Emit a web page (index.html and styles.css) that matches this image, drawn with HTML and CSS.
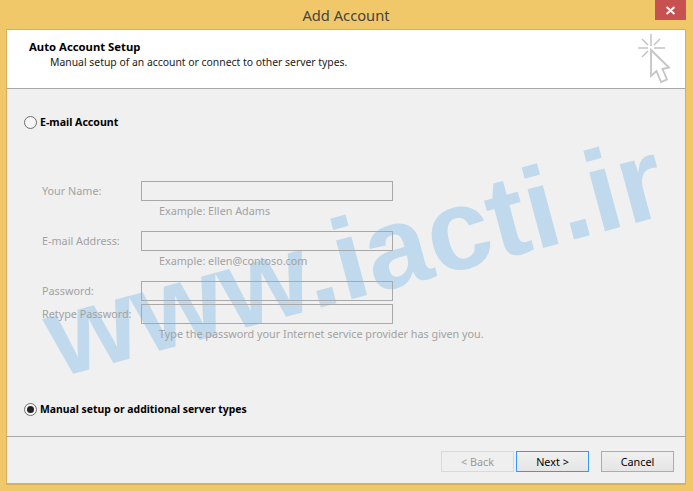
FILE: index.html
```html
<!DOCTYPE html>
<html lang="en">
<head>
<meta charset="utf-8">
<title>Add Account</title>
<link rel="stylesheet" href="styles.css">
</head>
<body>
<div class="window">
  <div class="titlebar">
    <div class="title">Add Account</div>
    <div class="close"><svg width="11" height="9" viewBox="0 0 11 9"><path d="M1.500 1 L9.500 8 M9.500 1 L1.500 8" stroke="#fff" stroke-width="2" fill="none"/></svg></div>
  </div>
  <div class="client">
    <div class="watermark">www.iacti.ir</div>
    <header class="head">
      <div class="head-text">
        <div class="head-title">Auto Account Setup</div>
        <div class="head-sub">Manual setup of an account or connect to other server types.</div>
      </div>
      <svg class="cursor" width="34" height="50" viewBox="0 0 34 50">
        <g stroke="#c4c4c4" stroke-width="1.500" fill="none">
          <path d="M14 0V12M1 14H11M17 14H28M5 5L11 11M23 5L17 11M5 23L11 17"/>
          <path d="M14 16V42L19.500 37L24 48L30 45.500L25.500 35L32 33.500Z" fill="#fff" stroke-width="1.800"/>
        </g>
      </svg>
    </header>
    <main class="body">
      <label class="radio-row first"><span class="radio"></span><span class="radio-label wide">E-mail Account</span></label>
      <div class="form">
        <div class="field"><span class="lbl">Your Name:</span><span class="box"></span></div>
        <div class="hint">Example: Ellen Adams</div>
        <div class="field gap"><span class="lbl">E-mail Address:</span><span class="box"></span></div>
        <div class="hint">Example: ellen@contoso.com</div>
        <div class="field gap"><span class="lbl">Password:</span><span class="box"></span></div>
        <div class="field tight"><span class="lbl">Retype Password:</span><span class="box"></span></div>
        <div class="hint">Type the password your Internet service provider has given you.</div>
      </div>
      <label class="radio-row second"><span class="radio on"></span><span class="radio-label">Manual setup or additional server types</span></label>
    </main>
    <footer class="foot">
      <button class="btn disabled">&lt; Back</button>
      <button class="btn default">Next &gt;</button>
      <button class="btn cancel">Cancel</button>
    </footer>
  </div>
</div>
</body>
</html>
```

FILE: styles.css
```css
* { box-sizing: border-box; }
html, body { margin: 0; padding: 0; }
body {
  width: 693px;
  height: 491px;
  overflow: hidden;
  background: #f0c86a;
  font-family: "Noto Sans", "Open Sans", sans-serif;
  font-size: 10.800px;
  color: #000;
}
.window {
  display: flex;
  flex-direction: column;
  height: 491px;
  padding: 0 7px 6px 6px;
}
.titlebar {
  height: 29px;
  flex: none;
  display: flex;
  justify-content: center;
  position: relative;
}
.title {
  font-size: 14.700px;
  line-height: 30px;
  color: #444;
}
.close {
  position: absolute;
  top: 0;
  right: 0;
  width: 31px;
  height: 20px;
  background: #c75050;
  display: flex;
  align-items: center;
  justify-content: center;
}
.client {
  flex: 1;
  position: relative;
  overflow: hidden;
  display: flex;
  flex-direction: column;
  background: #f0f0f0;
  border: 1px solid #d6b05a;
  border-bottom-width: 2px;
}
.watermark {
  position: absolute;
  left: 30px;
  top: 162px;
  font-family: "Liberation Sans", Arial, sans-serif;
  font-weight: 700;
  font-size: 115px;
  line-height: 130px;
  white-space: nowrap;
  color: #c0d9ec;
  transform: rotate(-15deg);
}
.head {
  position: relative;
  height: 59px;
  flex: none;
  background: #fff;
  border-bottom: 1px solid #a8a8a8;
  display: flex;
  justify-content: space-between;
  padding: 9px 14px 0 22px;
}
.head-title { font-weight: 700; font-size: 11.300px; line-height: 16px; }
.head-sub { padding-left: 21px; font-size: 10.400px; line-height: 14px; color: #1a1a1a; }
.cursor { margin-top: -5px; }
.body {
  position: relative;
  flex: 1;
  padding: 0 0 0 17px;
  display: flex;
  flex-direction: column;
}
.radio-row { display: flex; align-items: center; gap: 3px; font-weight: 700; font-size: 10.400px; height: 16px; }
.radio-label.wide { font-size: 10.600px; }
.radio-row.first { margin-top: 25px; }
.radio-row.second { margin-top: 57px; }
.radio {
  width: 13px;
  height: 13px;
  border-radius: 50%;
  border: 1px solid #6d6d6d;
  background: #f6f6f6;
  flex: none;
  display: flex;
  align-items: center;
  justify-content: center;
}
.radio.on::after {
  content: "";
  width: 7px;
  height: 7px;
  border-radius: 50%;
  background: #222;
}
.form { margin-top: 51px; padding-left: 18px; color: #a2a2a2; }
.field { display: flex; align-items: center; height: 20px; }
.field.gap { margin-top: 10px; }
.field.tight { margin-top: 3px; }
.lbl { width: 99px; flex: none; padding-bottom: 2px; }
.box { width: 252px; height: 20px; border: 1px solid #a9a9a9; }
.hint { padding-left: 117px; line-height: 20px; }
.foot {
  position: relative;
  height: 47px;
  flex: none;
  border-top: 1px solid #a8a8a8;
  display: flex;
  justify-content: flex-end;
  align-items: flex-start;
  padding: 14px 11px 0 0;
}
.btn {
  width: 73px;
  height: 21px;
  font: inherit;
  padding: 0;
  border: 1px solid #acacac;
  background: linear-gradient(#f0f0f0, #e5e5e5);
  color: #000;
}
.btn.disabled { border-color: #d9d9d9; background: #efefef; color: #9a9a9a; }
.btn.default { border-color: #3399ff; margin-left: 2px; }
.btn.cancel { margin-left: 12px; }
```
